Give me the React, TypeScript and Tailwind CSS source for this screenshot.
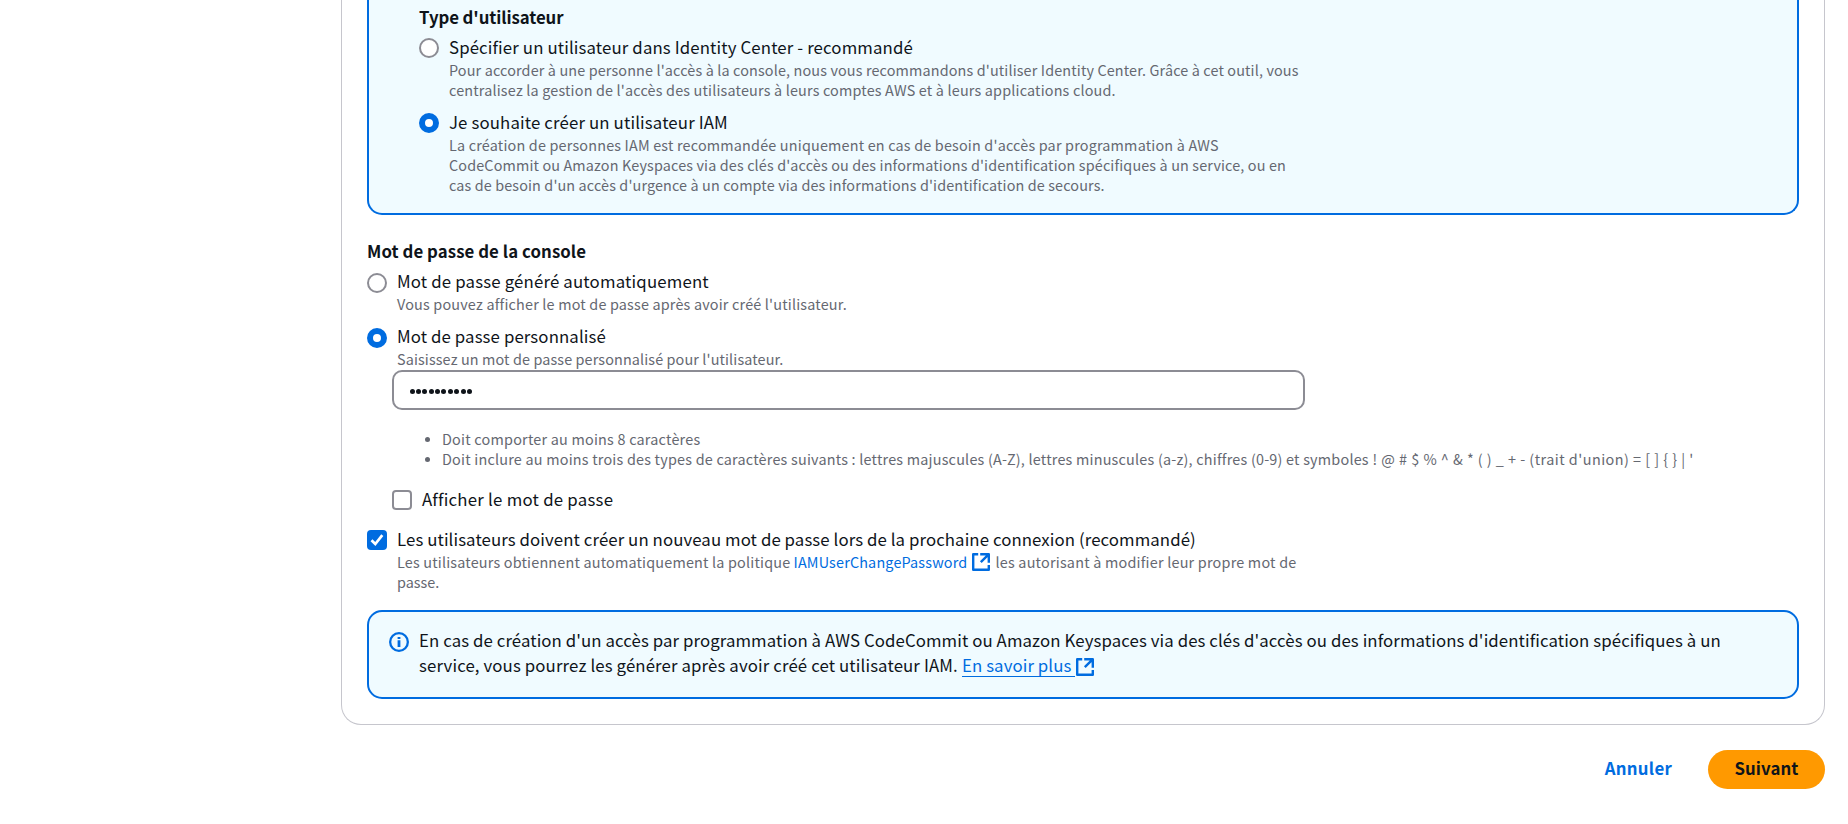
import React from "react";

function Radio({ checked = false, className = "mt-[3px]" }: { checked?: boolean; className?: string }) {
  return (
    <span
      role="radio"
      aria-checked={checked}
      className={`size-5 shrink-0 rounded-full bg-white ${
        checked ? "border-[6px] border-[#006ce0]" : "border-2 border-[#8c8c94]"
      } ${className}`}
    />
  );
}

function ExternalIcon() {
  return (
    <svg viewBox="0 0 18 18" className="size-[18px]" fill="none" stroke="currentColor" strokeWidth="2.4">
      <path d="M6.2 1.2H1.2v15.6h15.6V12" strokeLinejoin="round" />
      <path d="M8.2 1.2h8.6V9.8M16.4 1.6L8.8 9.2" strokeLinejoin="round" />
    </svg>
  );
}

function InfoIcon() {
  return (
    <svg viewBox="0 0 20 20" className="mt-1 size-5 shrink-0" fill="none" stroke="#006ce0" strokeWidth="2.3">
      <circle cx="10" cy="10" r="8.85" />
      <path d="M10 5v2M10 8.2v6.8" strokeWidth="2.8" />
    </svg>
  );
}

const desc = "text-[14.4px] leading-[20px] text-[#656871]";

export default function App() {
  return (
    <div className="flex h-[824px] flex-col overflow-hidden bg-white pr-[23px] pl-[341px] font-['Noto_Sans_CJK_JP','Noto_Sans',sans-serif] text-[16.8px] leading-[25px] whitespace-nowrap text-[#0f141a]">
      <main className="flex h-[725px] flex-col rounded-b-[20px] border border-t-0 border-[#c6c6cd] px-[25px]">
        <section className="h-[215px] rounded-b-[15px] border-2 border-t-0 border-[#006ce0] bg-[#f0fbff] pt-[5px] pl-[50px]">
          <h4 className="font-bold tracking-[-0.083px]">Type d'utilisateur</h4>
          <div className="mt-[5px] flex gap-[10px]">
            <Radio />
            <div>
              <div className="tracking-[0.131px]">Spécifier un utilisateur dans Identity Center - recommandé</div>
              <div className={desc}>
                <div className="tracking-[0.135px]">Pour accorder à une personne l'accès à la console, nous vous recommandons d'utiliser Identity Center. Grâce à cet outil, vous</div>
                <div className="tracking-[0.169px]">centralisez la gestion de l'accès des utilisateurs à leurs comptes AWS et à leurs applications cloud.</div>
              </div>
            </div>
          </div>
          <div className="mt-[10px] flex gap-[10px]">
            <Radio checked />
            <div>
              <div className="tracking-[0.144px]">Je souhaite créer un utilisateur IAM</div>
              <div className={desc}>
                <div className="tracking-[0.18px]">La création de personnes IAM est recommandée uniquement en cas de besoin d'accès par programmation à AWS</div>
                <div className="tracking-[0.131px]">CodeCommit ou Amazon Keyspaces via des clés d'accès ou des informations d'identification spécifiques à un service, ou en</div>
                <div className="tracking-[0.122px]">cas de besoin d'un accès d'urgence à un compte via des informations d'identification de secours.</div>
              </div>
            </div>
          </div>
        </section>

        <h4 className="mt-6 font-bold tracking-[0.076px]">Mot de passe de la console</h4>
        <div className="mt-[5px] flex gap-[10px]">
          <Radio className="mt-1" />
          <div>
            <div className="tracking-[0.177px]">Mot de passe généré automatiquement</div>
            <div className={desc}>
              <div className="tracking-[0.179px]">Vous pouvez afficher le mot de passe après avoir créé l'utilisateur.</div>
            </div>
          </div>
        </div>
        <div className="mt-[10px] flex gap-[10px]">
          <Radio checked className="mt-1" />
          <div>
            <div className="tracking-[0.116px]">Mot de passe personnalisé</div>
            <div className={desc}>
              <div className="tracking-[0.115px]">Saisissez un mot de passe personnalisé pour l'utilisateur.</div>
            </div>
          </div>
        </div>

        <div className="ml-[25px] flex flex-col">
          <div className="mt-px flex h-10 w-[913px] items-center gap-[1.4px] rounded-[10px] border-2 border-[#8c8c94] bg-white pt-[3px] pl-[15.5px]">
            {Array.from({ length: 10 }, (_, i) => (
              <span key={i} className="size-[5px] rounded-full bg-[#0f141a]" />
            ))}
          </div>
          <ul className="mt-[19px] ml-[33px] text-[14.4px] leading-[20px] text-[#656871]">
            <li className="flex items-center gap-[12px]">
              <span className="size-[5px] rounded-full bg-[#656871]" />
              <span className="tracking-[0.217px]">Doit comporter au moins 8 caractères</span>
            </li>
            <li className="flex items-center gap-[12px]">
              <span className="size-[5px] rounded-full bg-[#656871]" />
              <span>
                <span className="tracking-[0.21px]">
                  Doit inclure au moins trois des types de caractères suivants : lettres majuscules (A-Z), lettres minuscules (a-z), chiffres (0-9) et symboles
                </span>
                <span className="tracking-[0.47px]">{" ! @ # $ % ^ & * ( ) _ + - (trait d'union) = [ ] { } | '"}</span>
              </span>
            </li>
          </ul>
          <div className="mt-[18px] flex gap-[10px]">
            <span role="checkbox" aria-checked="false" className="mt-[3px] size-5 rounded-[4px] border-2 border-[#8c8c94] bg-white" />
            <span className="tracking-[0.25px]">Afficher le mot de passe</span>
          </div>
        </div>

        <div className="mt-[15px] flex gap-[10px]">
          <span role="checkbox" aria-checked="true" className="mt-[3px] flex size-5 items-center justify-center rounded-[4px] bg-[#006ce0]">
            <svg viewBox="0 0 20 20" className="size-5" fill="none" stroke="white" strokeWidth="2.7">
              <path d="M4.5 10.2L8.3 14L15.3 5.2" />
            </svg>
          </span>
          <div>
            <div className="tracking-[0.094px]">Les utilisateurs doivent créer un nouveau mot de passe lors de la prochaine connexion (recommandé)</div>
            <div className={desc}>
              <div className="flex">
                <span className="w-[396.5px] tracking-[0.18px]">Les utilisateurs obtiennent automatiquement la politique</span>
                <a className="flex w-[202px] items-center gap-[5px] text-[#006ce0]">
                  <span className="w-[173.5px] tracking-[0.16px]">IAMUserChangePassword</span>
                  <ExternalIcon />
                </a>
                <span className="tracking-[0.208px]">les autorisant à modifier leur propre mot de</span>
              </div>
              <div>passe.</div>
            </div>
          </div>
        </div>

        <section className="mt-[18px] flex h-[89px] gap-[10px] rounded-[15px] border-2 border-[#006ce0] bg-[#f0fbff] pt-4 pl-5">
          <InfoIcon />
          <div>
            <div className="tracking-[0.095px]">En cas de création d'un accès par programmation à AWS CodeCommit ou Amazon Keyspaces via des clés d'accès ou des informations d'identification spécifiques à un</div>
            <div className="flex">
              <span className="w-[543px] tracking-[0.125px]">service, vous pourrez les générer après avoir créé cet utilisateur IAM.</span>
              <a className="flex items-start text-[#006ce0]">
                <span className="h-6 w-[113px] border-b border-[#006ce0] tracking-[0.096px]">En savoir plus</span>
                <span className="mt-[5px] ml-px">
                  <ExternalIcon />
                </span>
              </a>
            </div>
          </div>
        </section>
      </main>

      <footer className="mt-[25px] flex h-[39px] items-center justify-end font-bold">
        <button className="mr-[36px] pb-[2px] tracking-[0.268px] text-[#006ce0]">Annuler</button>
        <button className="h-[39px] w-[117px] rounded-full bg-[#ff9900] pb-[2px] tracking-[0.125px]">Suivant</button>
      </footer>
    </div>
  );
}
